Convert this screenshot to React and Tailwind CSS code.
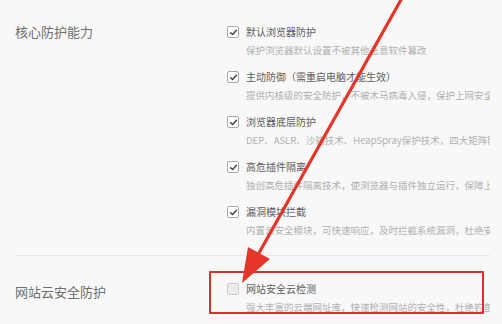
import React from "react";

const font = { fontFamily: '"Noto Sans CJK SC", "Noto Sans", sans-serif' };

function Box({ checked }) {
  return checked ? (
    <div className="w-[12px] h-[12px] shrink-0 rounded-[2px] border border-[#a9a9a9] bg-white flex items-center justify-center">
      <svg width="9" height="9" viewBox="0 0 10 10">
        <path d="M1.8 5.2 L4 7.3 L8.3 2.6" fill="none" stroke="#404040" strokeWidth="1.6" strokeLinecap="round" strokeLinejoin="round" />
      </svg>
    </div>
  ) : (
    <div className="w-[12px] h-[12px] shrink-0 rounded-[2px] border border-[#c9c9c9] bg-[#ededed]" />
  );
}

function Item({ checked, title, desc }) {
  return (
    <div className="flex flex-col">
      <div className="flex items-center gap-[7px] h-[18px]">
        <Box checked={checked} />
        <span className="text-[10px] leading-[18px] text-[#5c5c5c] whitespace-nowrap">{title}</span>
      </div>
      <div className="pl-[19px] text-[9.5px] leading-[18px] text-[#b0b0b0] whitespace-nowrap">{desc}</div>
    </div>
  );
}

const core = [
  ["默认浏览器防护", "保护浏览器默认设置不被其他恶意软件篡改"],
  ["主动防御（需重启电脑才能生效）", "提供内核级的安全防护，不被木马病毒入侵，保护上网安全"],
  ["浏览器底层防护", "DEP、ASLR、沙箱技术、HeapSpray保护技术，四大矩阵防护"],
  ["高危插件隔离", "独创高危插件隔离技术，使浏览器与插件独立运行，保障上网安全"],
  ["漏洞模块拦截", "内置云安全模块，可快速响应，及时拦截系统漏洞，杜绝安全隐患"],
];

export default function App() {
  return (
    <div className="relative w-[502px] h-[324px] bg-[#f8f8f8] overflow-hidden" style={font}>
      <div className="flex pt-[23px] pb-[16px]">
        <div className="w-[227px] shrink-0 pl-[15px] text-[13px] leading-[18px] text-[#6e6e6e]">核心防护能力</div>
        <div className="w-[263px] overflow-hidden flex flex-col gap-[9px]">
          {core.map(([t, d]) => (
            <Item key={t} checked title={t} desc={d} />
          ))}
        </div>
      </div>
      <div className="ml-[15px] w-[475px] h-px bg-[#e8e8e8]" />
      <div className="flex pt-[24px]">
        <div className="w-[227px] shrink-0 pl-[15px] text-[13px] leading-[18px] text-[#6e6e6e] mt-[3px]">网站云安全防护</div>
        <div className="w-[263px] overflow-hidden flex flex-col">
          <Item checked={false} title="网站安全云检测" desc="强大丰富的云端网址库，快速检测网站的安全性，杜绝钓鱼网站" />
        </div>
      </div>

      <div className="absolute left-[209px] top-[271px] w-[275px] h-[43px] border-2 border-[#d8312b] rounded-[1px]" />
      <svg className="absolute left-0 top-0" width="502" height="324" viewBox="0 0 502 324">
        <line x1="402" y1="-2" x2="259" y2="253" stroke="#e5342a" strokeWidth="3.2" strokeLinecap="round" />
        <polygon points="242,283 270,259 248,247" fill="#e5342a" />
      </svg>
    </div>
  );
}
